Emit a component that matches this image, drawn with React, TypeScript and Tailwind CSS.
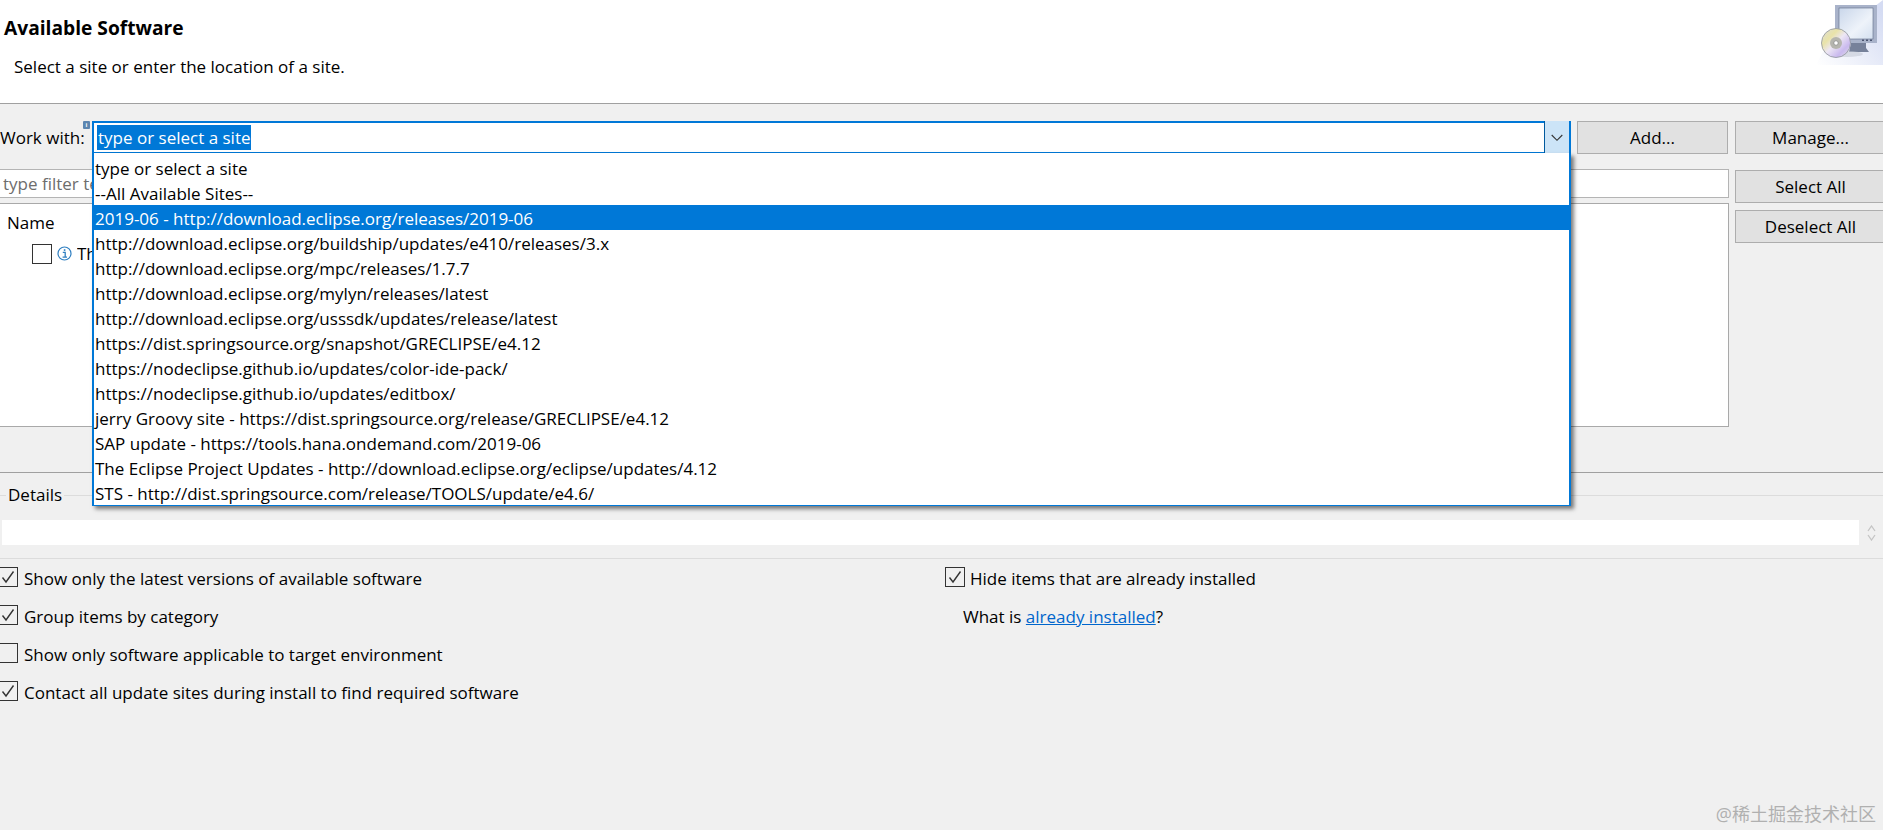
import React from "react";

const sites = [
  "type or select a site",
  "--All Available Sites--",
  "2019-06 - http://download.eclipse.org/releases/2019-06",
  "http://download.eclipse.org/buildship/updates/e410/releases/3.x",
  "http://download.eclipse.org/mpc/releases/1.7.7",
  "http://download.eclipse.org/mylyn/releases/latest",
  "http://download.eclipse.org/usssdk/updates/release/latest",
  "https://dist.springsource.org/snapshot/GRECLIPSE/e4.12",
  "https://nodeclipse.github.io/updates/color-ide-pack/",
  "https://nodeclipse.github.io/updates/editbox/",
  "jerry Groovy site - https://dist.springsource.org/release/GRECLIPSE/e4.12",
  "SAP update - https://tools.hana.ondemand.com/2019-06",
  "The Eclipse Project Updates - http://download.eclipse.org/eclipse/updates/4.12",
  "STS - http://dist.springsource.com/release/TOOLS/update/e4.6/",
];

function Check({ checked = true, className = "" }: { checked?: boolean; className?: string }) {
  return (
    <span className={`flex h-5 w-5 shrink-0 items-center justify-center border border-[#333333] ${className}`}>
      {checked && (
        <svg width="14" height="14" viewBox="0 0 14 14" fill="none">
          <path d="M1.5 7.5 L5 12 L12.5 1.5" stroke="#333333" strokeWidth="1.4" />
        </svg>
      )}
    </span>
  );
}

function Btn({ label, className = "" }: { label: string; className?: string }) {
  return (
    <div className={`flex h-[33px] w-[151px] shrink-0 items-center justify-center border border-[#adadad] bg-[#e1e1e1] pt-px ${className}`}>
      {label}
    </div>
  );
}

function Option({ label, checked = true }: { label: string; checked?: boolean }) {
  return (
    <div className="flex h-[38px] items-start">
      <Check checked={checked} className="-ml-[2px]" />
      <span className="ml-[6px] leading-[24px]">{label}</span>
    </div>
  );
}

function SoftwareIcon() {
  return (
    <svg width="67" height="65" viewBox="0 0 67 65" className="block">
      <defs>
        <linearGradient id="bgc" x1="0" y1="1" x2="1" y2="0.2">
          <stop offset="0" stopColor="#ffffff" />
          <stop offset="1" stopColor="#d5dcf3" />
        </linearGradient>
        <linearGradient id="scr" x1="0" y1="0" x2="1" y2="1">
          <stop offset="0" stopColor="#c9d6ea" />
          <stop offset="0.6" stopColor="#eef3fa" />
          <stop offset="1" stopColor="#d4e0f0" />
        </linearGradient>
        <linearGradient id="cd" x1="0" y1="0" x2="1" y2="1">
          <stop offset="0" stopColor="#dcdcdc" />
          <stop offset="0.3" stopColor="#e9e3a8" />
          <stop offset="0.5" stopColor="#ece6f4" />
          <stop offset="0.75" stopColor="#c9b9ee" />
          <stop offset="1" stopColor="#e4e4e4" />
        </linearGradient>
      </defs>
      <path d="M0 65 L12 42 L67 0 L67 65 Z" fill="url(#bgc)" />
      <rect x="19" y="5" width="42" height="38" fill="#a9b3ca" />
      <rect x="23" y="8" width="34" height="31" fill="url(#scr)" stroke="#5f6b85" strokeWidth="0.6" />
      <rect x="46" y="39.5" width="2" height="1.5" fill="#4a5470" />
      <rect x="50" y="39.5" width="2" height="1.5" fill="#4a5470" />
      <rect x="54" y="39.5" width="2" height="1.5" fill="#4a5470" />
      <path d="M35 43 H50 V48 L53 52 H33 Z" fill="#76819a" />
      <ellipse cx="31" cy="54" rx="16" ry="3" fill="#c4c9d6" opacity="0.6" />
      <circle cx="20" cy="43" r="14.5" fill="url(#cd)" stroke="#8f949c" strokeWidth="0.8" />
      <circle cx="20" cy="43" r="6" fill="#b5b5ae" />
      <circle cx="20" cy="43" r="2.2" fill="#ffffff" stroke="#777777" strokeWidth="0.6" />
    </svg>
  );
}

export default function App() {
  return (
    <div className="relative flex h-[830px] w-full flex-col overflow-hidden bg-[#f0f0f0] font-['Open_Sans','Noto_Sans_CJK_SC',sans-serif] text-[17px] text-black">
      <header className="relative h-[104px] shrink-0 border-b border-[#a0a0a0] bg-white">
        <h1 className="pl-1 pt-[15px] text-[19.2px] font-bold leading-[26px]">Available Software</h1>
        <p className="pl-[14px] pt-[15px] leading-[22px]">Select a site or enter the location of a site.</p>
        <div className="absolute right-0 top-0">
          <SoftwareIcon />
        </div>
      </header>

      <div className="relative mt-[17px] flex h-[33px] shrink-0">
        <span className="w-[83px] shrink-0 self-center whitespace-nowrap leading-[33px]">Work with:</span>
        <span className="flex h-[8px] w-[7px] shrink-0 items-center justify-center rounded-[1px] bg-[#5c86b0] text-[6px] font-bold leading-none text-white">i</span>
        <div className="ml-[2px] flex w-[1479px] shrink-0 items-center border-2 border-[#0078d7] bg-white pl-[3px]">
          <span className="bg-[#0078d7] pl-px leading-[25px] text-white">type or select a site</span>
          <div className="-my-[2px] ml-auto flex h-[33px] w-[25px] items-center justify-center border-l border-[#005a9e] bg-[#cce4f7]">
            <svg width="12" height="8" viewBox="0 0 12 8" fill="none">
              <path d="M0.7 1 L6 6.3 L11.3 1" stroke="#333333" strokeWidth="1.1" />
            </svg>
          </div>
        </div>
        <Btn label="Add..." className="ml-[6px]" />
        <Btn label="Manage..." className="ml-[7px]" />

        <div className="absolute left-[92px] top-[32px] z-10 w-[1479px] border-x-2 border-b border-[#0078d7] bg-white pt-[2px] shadow-[3px_3px_4px_rgba(0,0,0,0.5)]">
          {sites.map((s, i) => (
            <div
              key={s}
              className={`h-[25px] whitespace-nowrap pl-[1px] leading-[27px] ${i === 2 ? "bg-[#0078d7] text-white" : ""}`}
            >
              {s}
            </div>
          ))}
        </div>
      </div>

      <div className="mt-[15px] flex shrink-0">
        <div className="w-[1729px] shrink-0">
          <div className="flex h-[29px] items-center border border-l-0 border-[#b4b4b4] bg-white pl-[3px] text-[#6d6d6d]">
            <span className="w-[92px] overflow-hidden whitespace-nowrap">type filter text</span>
          </div>
          <div className="mt-[5px] h-[224px] border border-l-0 border-[#a9a9a9] bg-white pl-[7px] pt-[8px]">
            <div className="leading-[22px]">Name</div>
            <div className="mt-[7px] flex items-center pl-[25px]">
              <Check checked={false} />
              <svg width="15" height="15" viewBox="0 0 15 15" className="ml-[5px]" fill="none">
                <circle cx="7.5" cy="7.5" r="6.5" stroke="#2f7fc1" strokeWidth="1.2" />
                <rect x="6.8" y="3.2" width="1.6" height="1.7" fill="#2f7fc1" />
                <path d="M5.8 6.3 H8.2 V11 M5.6 11.2 H10" stroke="#2f7fc1" strokeWidth="1.3" />
              </svg>
              <span className="ml-[5px] w-[15px] overflow-hidden whitespace-nowrap">There</span>
            </div>
          </div>
        </div>
        <div className="ml-[6px] flex flex-col pt-[1px]">
          <Btn label="Select All" />
          <Btn label="Deselect All" className="mt-[7px]" />
        </div>
      </div>

      <div className="mt-[45px] h-px shrink-0 bg-[#a0a0a0]" />

      <div className="mt-[10px] flex h-[24px] shrink-0 items-center">
        <div className="h-px w-[6px] bg-[#dcdcdc]" />
        <span className="px-[2px] leading-[24px]">Details</span>
        <div className="h-px flex-1 bg-[#dcdcdc]" />
      </div>

      <div className="mt-[13px] flex h-[25px] shrink-0">
        <div className="ml-[2px] w-[1857px] bg-white" />
        <div className="flex flex-1 flex-col items-center justify-center gap-[2px]">
          <svg width="9" height="7" viewBox="0 0 9 7" fill="none"><path d="M1 6 L4.5 1 L8 6" stroke="#c4c4c4" strokeWidth="1.3" /></svg>
          <svg width="9" height="7" viewBox="0 0 9 7" fill="none"><path d="M1 1 L4.5 6 L8 1" stroke="#c4c4c4" strokeWidth="1.3" /></svg>
        </div>
      </div>

      <div className="mt-[13px] h-px shrink-0 bg-[#dcdcdc]" />

      <div className="mt-[8px] flex shrink-0">
        <div className="w-[945px] shrink-0">
          <Option label="Show only the latest versions of available software" />
          <Option label="Group items by category" />
          <Option label="Show only software applicable to target environment" checked={false} />
          <Option label="Contact all update sites during install to find required software" />
        </div>
        <div>
          <div className="flex h-[38px] items-start">
            <Check />
            <span className="ml-[5px] leading-[24px]">Hide items that are already installed</span>
          </div>
          <div className="pl-[18px] leading-[24px]">
            What is <span className="text-[#0066cc] underline">already installed</span>?
          </div>
        </div>
      </div>

      <div className="absolute bottom-[4px] right-[7px] text-[18px] leading-[24px] text-[#b0b0b0]">@稀土掘金技术社区</div>
    </div>
  );
}
